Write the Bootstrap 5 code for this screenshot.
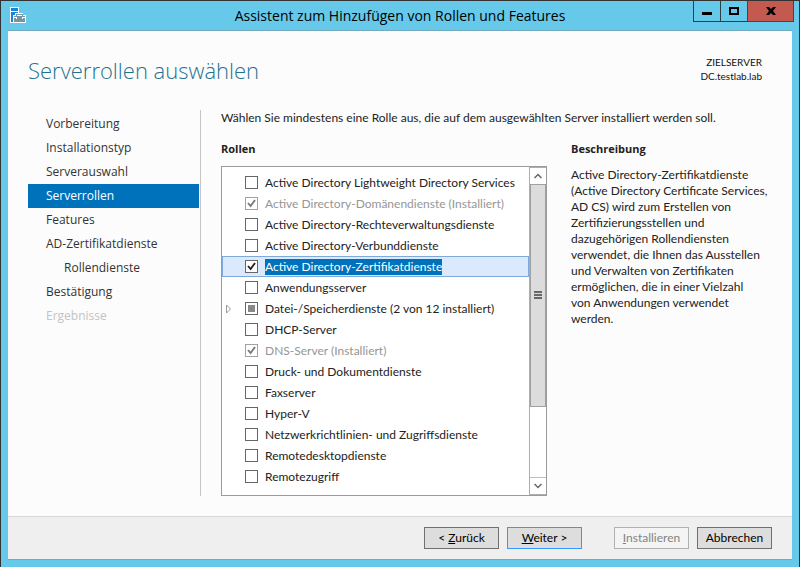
<!DOCTYPE html>
<html lang="de">
<head>
<meta charset="utf-8">
<meta name="viewport" content="width=device-width, initial-scale=1">
<title>Assistent zum Hinzufügen von Rollen und Features</title>
<link href="https://cdn.jsdelivr.net/npm/bootstrap@5.3.0/dist/css/bootstrap.min.css" rel="stylesheet">
<style>
  body { font-family: Lato, "Noto Sans", sans-serif; font-size: 12px; line-height: 16px; color: #222; }
  .wizard { background: #66c9ea; border: 1px solid #333; padding: 0 7px 7px; }
  .titlebar { height: 29px; }
  .titlebar h1 { font-family: "Open Sans", sans-serif; font-size: 14px; line-height: 29px; color: #000; }
  .app-icon { width: 16px; height: 16px; margin: 6px 0 0 2px; }
  .side { width: 100px; }
  .win-buttons { margin-right: -2px; height: 21px; }
  .win-btn { width: 28px; border: 1px solid #2b3f48; border-top: 0; background: transparent; margin-left: -1px; }
  .win-btn.close-btn { width: 47px; background: #c4594f; border-color: #6f3430; }
  .client { background: #fcfcfc; border-top: 1px solid #74a9bd; border-bottom: 1px solid #74a9bd; }
  .page-head { padding: 23px 30px 0 20px; height: 79px; }
  .page-head h2 { font-family: "Open Sans", sans-serif; font-size: 22px; line-height: 32px; font-weight: 300; color: #1f7391; }
  .target { font-size: 10px; line-height: 14px; padding-top: 1px; color: #111; }
  .steps { font-family: "Open Sans", sans-serif; font-size: 12px; width: 173px; border-right: 1px solid #c6c6c6; padding: 2px 1px 0 0; margin: 0 20px 20px; flex: none; }
  .steps .nav-link { padding: 0 18px; line-height: 24px; color: #333; border-radius: 0; }
  .steps .nav-link.active { background: #0072bc; color: #fff; }
  .steps .nav-link.sub-step { padding-left: 36px; }
  .steps .nav-link.disabled { color: #c3c3c3; }
  .content-area { margin-right: 20px; margin-bottom: 20px; }
  .intro { margin-bottom: 15px; }
  .roles-col { width: 326px; flex: none; }
  .section-title { font-family: "Open Sans", sans-serif; font-size: 11px; line-height: 16px; font-weight: 700; margin: 0; }
  .role-box { border: 1px solid #9b9b9b; background: #fff; margin-top: 9px; height: 330px; }
  .role-list { padding-top: 5px; }
  .role-row { height: 21px; border: 1px solid transparent; padding-left: 3px; gap: 7px; color: #222; }
  .role-row.picked { background: #dbe9fd; border-color: #7eaadb; }
  .role-row.picked label { background: #0072bc; color: #fff; }
  .role-row.off label { color: #969696; }
  .twisty { width: 12px; height: 14px; padding: 0; border: 0; background: none; line-height: 0; }
  .twisty svg { display: block; }
  .role-row .form-check-input { width: 13px; height: 13px; margin: 0; border: 1px solid #666; border-radius: 0; background-color: #fff; background-size: 11px 11px; box-shadow: none; flex: none; }
  .role-row .form-check-input:checked { background-color: #fff; background-image: url("data:image/svg+xml,%3Csvg xmlns='http://www.w3.org/2000/svg' viewBox='0 0 11 11'%3E%3Cpath d='M2 5l2.600 3L9 2' fill='none' stroke='%23222' stroke-width='1.900'/%3E%3C/svg%3E"); }
  .role-row .form-check-input:indeterminate { background-color: #fff; border-color: #666; background-image: url("data:image/svg+xml,%3Csvg xmlns='http://www.w3.org/2000/svg' viewBox='0 0 11 11'%3E%3Cpath d='M2 2h7v7H2z' fill='%23888'/%3E%3C/svg%3E"); }
  .role-row .form-check-input:disabled { opacity: .6; }
  .role-row .form-check-input:disabled ~ label { opacity: 1; }
  .scroller { width: 17px; border: 1px solid #adadad; border-right: 0; flex: none; }
  .scroller button { height: 16px; border: 0; padding: 0; background: #fff; line-height: 0; }
  .scroll-track { border-top: 1px solid #a0a0a0; border-bottom: 1px solid #bdbdbd; }
  .scroll-thumb { height: 222px; background: #dcdcdc; border: 1px solid #a0a0a0; border-top: 0; }
  .description { margin-top: 10px; }
  .actions { background: #efefef; border-top: 1px solid #d9d9d9; padding: 10px 20px; gap: 8px; }
  .wiz-btn { width: 75px; height: 22px; padding: 0; border: 1px solid #707070; border-radius: 0; background: #ddd; font-size: 12px; line-height: 20px; color: #000; }
  .wiz-btn.primary-action { border-color: #3399ff; }
  .wiz-btn:disabled { background: #f4f4f4; border-color: #adb2b5; color: #838383; opacity: 1; }
</style>
</head>
<body>
<div class="wizard min-vh-100 d-flex flex-column">
  <header class="titlebar d-flex justify-content-between">
    <div class="side">
      <svg class="app-icon d-block" viewBox="0 0 16 16" aria-hidden="true">
        <path d="M0 0h9v6h4v2h3v8H0z" fill="#fff"/>
        <path d="M1 1h7v3H1zM1 5h7v1H5v2H3v7H1z" fill="#1784d8"/>
        <path d="M4 9h11v6H4zM6 9V7h7v2h-1V8H7v1z" fill="#7893a8"/>
        <path d="M4 10h3v1h5v-1h3v1h-2v1h-1v-1H7v1H6v-1H4z" fill="#fff"/>
      </svg>
    </div>
    <h1 class="fw-normal m-0 text-center text-nowrap">Assistent zum Hinzufügen von Rollen und Features</h1>
    <div class="side d-flex justify-content-end">
      <div class="win-buttons d-flex">
        <button type="button" class="win-btn d-flex align-items-center justify-content-center p-0" aria-label="Minimieren"><svg width="10" height="7"><path d="M0 4h10v3H0z"/></svg></button>
        <button type="button" class="win-btn d-flex align-items-center justify-content-center p-0" aria-label="Maximieren"><svg width="10" height="8"><path d="M1 1h8v6H1z" fill="none" stroke="#000" stroke-width="2"/></svg></button>
        <button type="button" class="win-btn close-btn d-flex align-items-center justify-content-center p-0" aria-label="Schließen"><svg width="10" height="8"><path d="M0 0h3l2 2 2-2h3L7 4l3 4H7L5 6 3 8H0l3-4z"/></svg></button>
      </div>
    </div>
  </header>

  <main class="client flex-grow-1 d-flex flex-column">
    <div class="page-head d-flex justify-content-between align-items-start">
      <h2 class="m-0">Serverrollen auswählen</h2>
      <div class="target text-end">ZIELSERVER<br>DC.testlab.lab</div>
    </div>

    <div class="d-flex flex-grow-1">
      <nav class="steps nav flex-column flex-nowrap" aria-label="Schritte">
        <a class="nav-link" href="#">Vorbereitung</a>
        <a class="nav-link" href="#">Installationstyp</a>
        <a class="nav-link" href="#">Serverauswahl</a>
        <a class="nav-link active" href="#" aria-current="step">Serverrollen</a>
        <a class="nav-link" href="#">Features</a>
        <a class="nav-link" href="#">AD-Zertifikatdienste</a>
        <a class="nav-link sub-step" href="#">Rollendienste</a>
        <a class="nav-link" href="#">Bestätigung</a>
        <a class="nav-link disabled" href="#" aria-disabled="true" tabindex="-1">Ergebnisse</a>
      </nav>

      <div class="content-area flex-grow-1">
        <p class="intro">Wählen Sie mindestens eine Rolle aus, die auf dem ausgewählten Server installiert werden soll.</p>
        <div class="d-flex gap-4">
          <section class="roles-col">
            <h3 class="section-title">Rollen</h3>
            <div class="role-box d-flex">
              <div class="role-list flex-grow-1">
                <div class="role-row d-flex align-items-center"><span class="twisty"></span><input class="form-check-input" type="checkbox" id="r1"><label for="r1">Active Directory Lightweight Directory Services</label></div>
                <div class="role-row off d-flex align-items-center"><span class="twisty"></span><input class="form-check-input" type="checkbox" id="r2" checked disabled><label for="r2">Active Directory-Domänendienste (Installiert)</label></div>
                <div class="role-row d-flex align-items-center"><span class="twisty"></span><input class="form-check-input" type="checkbox" id="r3"><label for="r3">Active Directory-Rechteverwaltungsdienste</label></div>
                <div class="role-row d-flex align-items-center"><span class="twisty"></span><input class="form-check-input" type="checkbox" id="r4"><label for="r4">Active Directory-Verbunddienste</label></div>
                <div class="role-row picked d-flex align-items-center"><span class="twisty"></span><input class="form-check-input" type="checkbox" id="r5" checked><label for="r5">Active Directory-Zertifikatdienste</label></div>
                <div class="role-row d-flex align-items-center"><span class="twisty"></span><input class="form-check-input" type="checkbox" id="r6"><label for="r6">Anwendungsserver</label></div>
                <div class="role-row d-flex align-items-center"><button type="button" class="twisty" aria-label="Erweitern"><svg width="6" height="10"><path d="M.5 1v8l4-4z" fill="#fff" stroke="#999"/></svg></button><input class="form-check-input" type="checkbox" id="r7"><label for="r7">Datei-/Speicherdienste (2 von 12 installiert)</label></div>
                <div class="role-row d-flex align-items-center"><span class="twisty"></span><input class="form-check-input" type="checkbox" id="r8"><label for="r8">DHCP-Server</label></div>
                <div class="role-row off d-flex align-items-center"><span class="twisty"></span><input class="form-check-input" type="checkbox" id="r9" checked disabled><label for="r9">DNS-Server (Installiert)</label></div>
                <div class="role-row d-flex align-items-center"><span class="twisty"></span><input class="form-check-input" type="checkbox" id="r10"><label for="r10">Druck- und Dokumentdienste</label></div>
                <div class="role-row d-flex align-items-center"><span class="twisty"></span><input class="form-check-input" type="checkbox" id="r11"><label for="r11">Faxserver</label></div>
                <div class="role-row d-flex align-items-center"><span class="twisty"></span><input class="form-check-input" type="checkbox" id="r12"><label for="r12">Hyper-V</label></div>
                <div class="role-row d-flex align-items-center"><span class="twisty"></span><input class="form-check-input" type="checkbox" id="r13"><label for="r13">Netzwerkrichtlinien- und Zugriffsdienste</label></div>
                <div class="role-row d-flex align-items-center"><span class="twisty"></span><input class="form-check-input" type="checkbox" id="r14"><label for="r14">Remotedesktopdienste</label></div>
                <div class="role-row d-flex align-items-center"><span class="twisty"></span><input class="form-check-input" type="checkbox" id="r15"><label for="r15">Remotezugriff</label></div>
              </div>
              <div class="scroller d-flex flex-column">
                <button type="button" class="d-flex align-items-center justify-content-center" aria-label="Nach oben"><svg width="8" height="6"><path d="M.5 5L4 1.500 7.500 5" fill="none" stroke="#666" stroke-width="1.500"/></svg></button>
                <div class="scroll-track flex-grow-1">
                  <div class="scroll-thumb d-flex align-items-center justify-content-center"><svg width="8" height="9"><path d="M0 1h8M0 4h8M0 7h8" stroke="#666" stroke-width="2"/></svg></div>
                </div>
                <button type="button" class="d-flex align-items-center justify-content-center" aria-label="Nach unten"><svg width="8" height="6"><path d="M.5 1L4 4.500 7.500 1" fill="none" stroke="#666" stroke-width="1.500"/></svg></button>
              </div>
            </div>
          </section>
          <section class="flex-grow-1">
            <h3 class="section-title">Beschreibung</h3>
            <p class="description mb-0">Active Directory-Zertifikatdienste (Active Directory Certificate Services, AD CS) wird zum Erstellen von Zertifizierungsstellen und dazugehörigen Rollendiensten verwendet, die Ihnen das Ausstellen und Verwalten von Zertifikaten ermöglichen, die in einer Vielzahl<br>von Anwendungen verwendet<br>werden.</p>
          </section>
        </div>
      </div>
    </div>

    <footer class="actions d-flex justify-content-end">
      <button type="button" class="btn wiz-btn">&lt; <u>Z</u>urück</button>
      <button type="button" class="btn wiz-btn primary-action"><u>W</u>eiter &gt;</button>
      <button type="button" class="btn wiz-btn ms-4" disabled><u>I</u>nstallieren</button>
      <button type="button" class="btn wiz-btn">Abbrechen</button>
    </footer>
  </main>
</div>
<script src="https://cdn.jsdelivr.net/npm/bootstrap@5.3.0/dist/js/bootstrap.bundle.min.js"></script>
<script>document.getElementById('r7').indeterminate = true;</script>
</body>
</html>
